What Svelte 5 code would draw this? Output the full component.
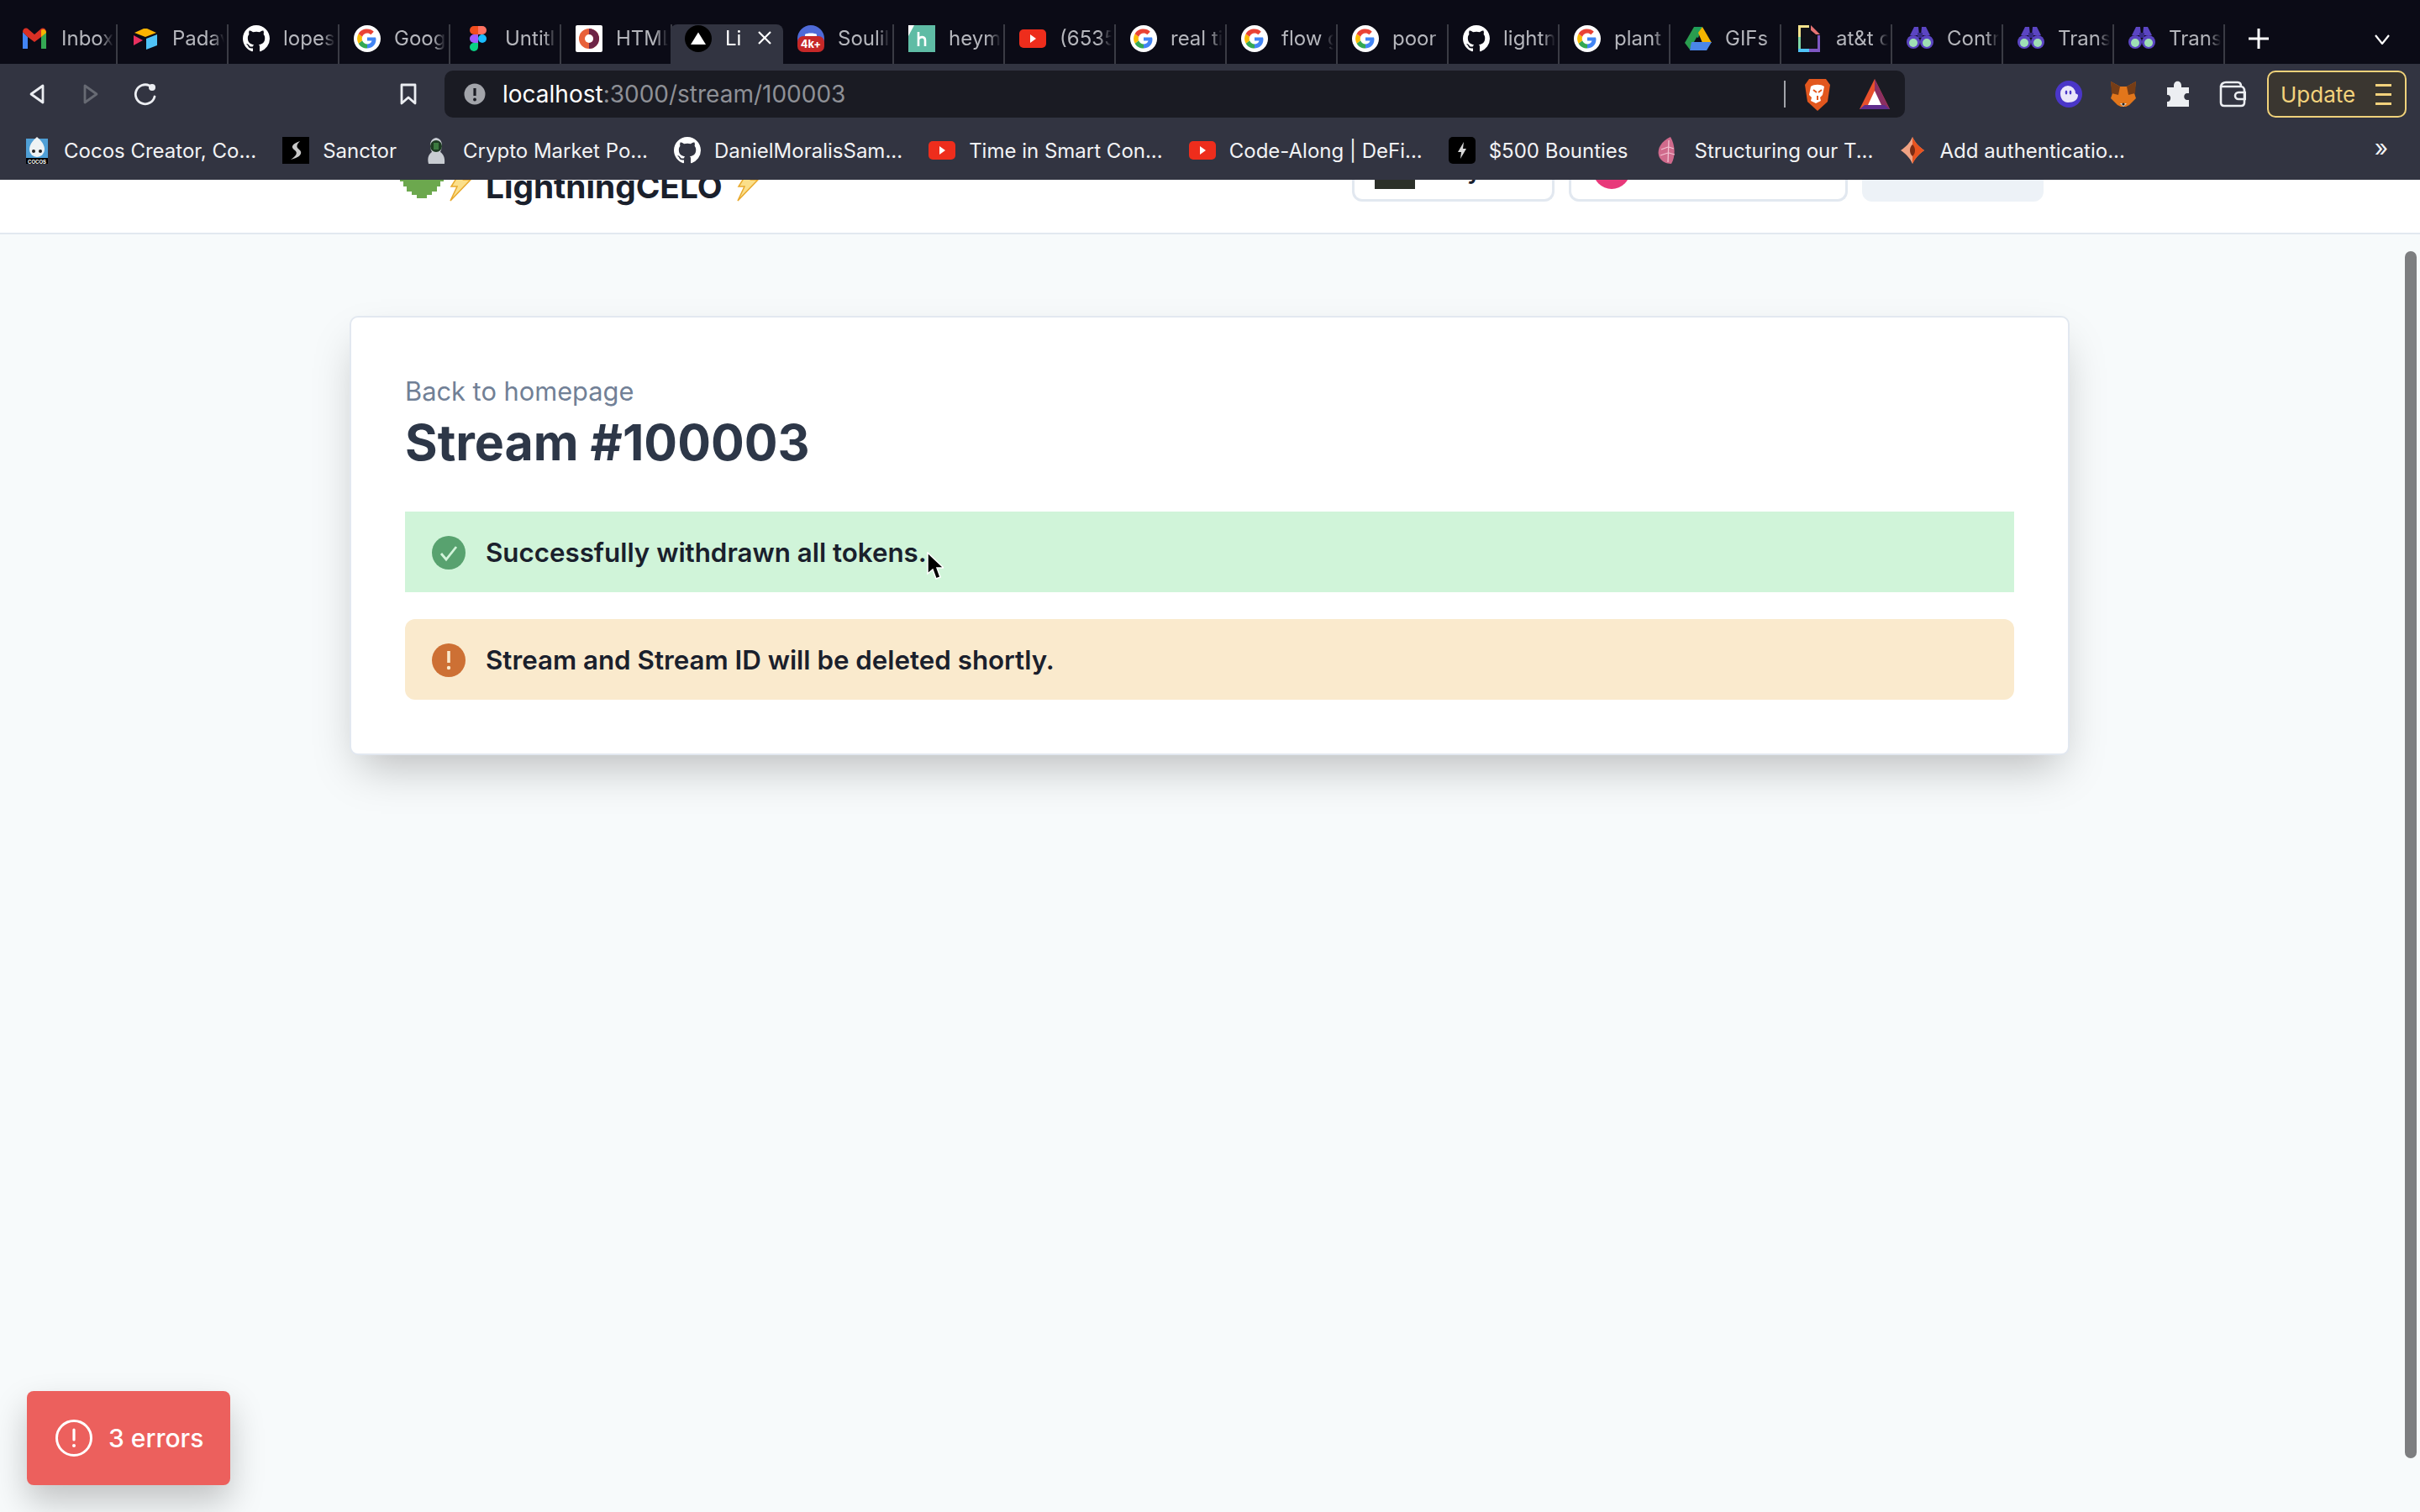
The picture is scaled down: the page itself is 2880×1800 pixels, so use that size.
<script>
  const tabs = [
    { icon: 'gmail', label: 'Inbox' },
    { icon: 'airtable', label: 'Padav' },
    { icon: 'github', label: 'lopes' },
    { icon: 'google', label: 'Goog' },
    { icon: 'figma', label: 'Untitl' },
    { icon: 'html', label: 'HTML' },
    { icon: 'vercel', label: 'Li', active: true },
    { icon: 'soul', label: 'Soulil' },
    { icon: 'hey', label: 'heym' },
    { icon: 'youtube', label: '(6535' },
    { icon: 'google', label: 'real ti' },
    { icon: 'google', label: 'flow g' },
    { icon: 'google', label: 'poor' },
    { icon: 'github', label: 'lightn' },
    { icon: 'google', label: 'plant' },
    { icon: 'drive', label: 'GIFs' },
    { icon: 'doc', label: 'at&t c' },
    { icon: 'scan', label: 'Contr' },
    { icon: 'scan', label: 'Trans' },
    { icon: 'scan', label: 'Trans' }
  ]

  const bookmarks = [
    { icon: 'cocos', label: 'Cocos Creator, Co...' },
    { icon: 'sanctor', label: 'Sanctor' },
    { icon: 'astro', label: 'Crypto Market Po...' },
    { icon: 'github', label: 'DanielMoralisSam...' },
    { icon: 'youtube', label: 'Time in Smart Con...' },
    { icon: 'youtube', label: 'Code-Along | DeFi...' },
    { icon: 'bolt', label: '$500 Bounties' },
    { icon: 'leaf', label: 'Structuring our T...' },
    { icon: 'gitdiamond', label: 'Add authenticatio...' }
  ]
</script>

{#snippet favicon(name)}
  <svg class="fav" viewBox="0 0 32 32">
    {#if name === 'gmail'}
      <path d="M2 8v20h6V14z" fill="#4285f4"/>
      <path d="M24 14v14h6V8z" fill="#34a853"/>
      <path d="M2 8c0-4 4-6 7-3l7 6 7-6c3-3 7-1 7 3l-6 6-8 6-8-6z" fill="#d93025"/>
      <path d="M24 14V6c2-2 6-1 6 3z" fill="#f4b400"/>
    {:else if name === 'airtable'}
      <path d="M14 4 3 9l13 5 13-5-11-5z" fill="#fcb400"/>
      <path d="M17 16v13l13-5V11z" fill="#4fc3f7"/>
      <path d="M2 12v12l11-6z" fill="#e8305f"/>
    {:else if name === 'github'}
      <path transform="scale(2)" d="M8 0C3.580 0 0 3.580 0 8c0 3.540 2.290 6.530 5.470 7.590.4.070.55-.17.55-.38 0-.19-.01-.82-.01-1.490-2.010.37-2.530-.49-2.690-.94-.09-.23-.48-.94-.82-1.130-.28-.15-.68-.52-.01-.53.63-.01 1.080.58 1.230.82.72 1.210 1.870.87 2.330.66.07-.52.28-.87.51-1.070-1.780-.2-3.640-.89-3.640-3.950 0-.87.31-1.590.82-2.150-.08-.2-.36-1.020.08-2.120 0 0 .67-.21 2.200.82.64-.18 1.320-.27 2-.27.68 0 1.360.09 2 .27 1.530-1.040 2.200-.82 2.200-.82.44 1.100.16 1.920.08 2.120.51.56.82 1.270.82 2.150 0 3.070-1.870 3.750-3.650 3.950.29.25.54.73.54 1.480 0 1.070-.01 1.930-.01 2.200 0 .21.15.46.55.38A8.013 8.013 0 0 0 16 8c0-4.420-3.580-8-8-8z" fill="#fff"/>
    {:else if name === 'google'}
      <circle cx="16" cy="16" r="16" fill="#fff"/>
      <path d="M26 14.500H16v4h5.600c-.8 2.600-3 4-5.600 4v5c5.500 0 10.500-3.500 10.500-11z" fill="#4285f4"/>
      <path d="M16 22.500c-2.800 0-5-1.700-5.900-4.200l-4.500 3.400c1.900 3.800 5.800 5.800 10.400 5.800z" fill="#34a853"/>
      <path d="M10.100 18.300a7 7 0 0 1 0-4.600L5.600 10.300a12 12 0 0 0 0 11.400z" fill="#fbbc05"/>
      <path d="M16 9.500c1.700 0 3.200.6 4.300 1.700l3.500-3.500C21.700 5.700 19 4.500 16 4.500c-4.600 0-8.500 2-10.400 5.800l4.500 3.400c.9-2.500 3.100-4.200 5.900-4.200z" fill="#ea4335"/>
    {:else if name === 'figma'}
      <path d="M16 1h-5a5 5 0 0 0 0 10h5z" fill="#f24e1e"/>
      <path d="M16 1h5a5 5 0 0 1 0 10h-5z" fill="#ff7262"/>
      <path d="M16 11h-5a5 5 0 0 0 0 10h5z" fill="#a259ff"/>
      <circle cx="21" cy="16" r="5" fill="#1abcfe"/>
      <path d="M11 21h5v5a5 5 0 1 1-5-5z" fill="#0acf83"/>
    {:else if name === 'html'}
      <rect width="32" height="32" rx="2" fill="#fff"/>
      <circle cx="16" cy="16" r="12" fill="#e8603a"/>
      <path d="M16 4a12 12 0 0 1 0 24v-7a5 5 0 0 0 0-10z" fill="#6e2446"/>
      <circle cx="16" cy="16" r="5" fill="#fff"/>
    {:else if name === 'vercel'}
      <circle cx="16" cy="16" r="16" fill="#000"/>
      <path d="M16 8.500 25 23H7z" fill="#fff"/>
    {:else if name === 'soul'}
      <circle cx="16" cy="16" r="16" fill="#4f6bd8"/>
      <path d="M9 11c2-2 12-2 14 0v3H9z" fill="#fff"/>
      <rect y="13" width="32" height="19" rx="7" fill="#c62828"/>
      <text x="16" y="27" text-anchor="middle" class="mini">4k+</text>
    {:else if name === 'hey'}
      <rect width="32" height="32" fill="#5fbca5"/>
      <path d="M0 0h7L0 13z" fill="#fff"/>
      <path d="M12 8v17M12 17c2-4 8-4 8 1v7" fill="none" stroke="#fff" stroke-width="2.600"/>
    {:else if name === 'youtube'}
      <rect y="5" width="32" height="22" rx="5" fill="#ee2d1c"/>
      <path d="M13 11v10l7-5z" fill="#fff"/>
    {:else if name === 'drive'}
      <path d="M11 2h10l-5 13-5-2z" fill="#1e9e5a"/>
      <path d="M21 2 32 21H21L16 9z" fill="#f5b400"/>
      <path d="M11 2 0 21l6 8 10-18z" fill="#2a9d4f"/>
      <path d="M8 20h24l-6 10H6z" fill="#4a86e8"/>
    {:else if name === 'doc'}
      <path d="M3 0h13v2H6v26h20v-16h3v20H3z" fill="#4fc3f7"/>
      <path d="M3 0h13v3H6v11H3z" fill="#f3e28c"/>
      <path d="M3 14h3v14H3z" fill="#7ed6a5"/>
      <path d="M26 12h3v20H16v-4h10z" fill="#7e57c2"/>
      <path d="M18 0l11 11h-5l-6-5z" fill="#e57373"/>
      <path d="M6 3h12v8h8v17H6z" fill="#111118"/>
    {:else if name === 'scan'}
      <path d="M4 12 9 2h5l1 10zM28 12 23 2h-5l-1 10z" fill="#5b45c2"/>
      <path d="M13 9h6v6h-6z" fill="#3a2c8c"/>
      <circle cx="8" cy="20" r="8" fill="#5b45c2"/>
      <circle cx="24" cy="20" r="8" fill="#5b45c2"/>
      <circle cx="8" cy="21" r="5" fill="#9fe0b4"/>
      <circle cx="24" cy="21" r="5" fill="#9fe0b4"/>
    {:else if name === 'cocos'}
      <rect x="3" y="2" width="26" height="23" fill="#4f9fd6"/>
      <path d="M16 0c6 5 9 10 9 15a9 9 0 0 1-18 0c0-5 3-10 9-15z" fill="#eef2f4"/>
      <circle cx="12" cy="17" r="2" fill="#222"/>
      <circle cx="20" cy="17" r="2" fill="#222"/>
      <rect x="3" y="25" width="26" height="7" fill="#000"/>
      <text x="16" y="31.500" text-anchor="middle" class="tiny">COCOS</text>
    {:else if name === 'sanctor'}
      <rect width="32" height="32" fill="#000"/>
      <path d="M21 5C12 8 9 12 15 16c4 3 1 7-5 11 9-2 16-7 10-12-4-3-3-6 1-10z" fill="#c9c9c9"/>
    {:else if name === 'astro'}
      <path d="M7 32c-2-8 1-12 4-14C7 10 9 2 16 1c7 1 9 9 5 17 3 2 6 6 5 14z" fill="#c8ccd2"/>
      <circle cx="16" cy="11" r="7" fill="#1d3b22"/>
      <path d="M13 7h6v8h-6z" fill="#3c7a40"/>
    {:else if name === 'bolt'}
      <rect width="32" height="32" rx="5" fill="#000"/>
      <path d="M18 6 11 18h4l-1 8 7-12h-4z" fill="#d8d8d8"/>
    {:else if name === 'leaf'}
      <path d="M19 0C8 5 3 14 5 22c2 7 9 10 15 10 5-8 5-22-1-32z" fill="#d06a8c"/>
      <path d="M17 4l-1 26M16 12l-8 3M16 19l-9 3M17 12l6 2M17 19l7 2" stroke="#f3c1d2" stroke-width="1.300" fill="none"/>
    {:else if name === 'gitdiamond'}
      <path d="M16 0c3 7 8 12 14 16-6 4-11 9-14 16-3-7-8-12-14-16C8 12 13 7 16 0z" fill="#f0a283"/>
      <path d="M16 0c3 7 8 12 14 16-6 4-11 9-14 16z" fill="#e8531f"/>
      <path d="M16 9c2 2 3 4 3 7s-1 5-3 7c-2-2-3-4-3-7s1-5 3-7z" fill="#7a2c14"/>
    {/if}
  </svg>
{/snippet}

{#snippet lightning()}
  <svg class="zap" viewBox="0 0 28 38">
    <path d="M14 1h13L17 12h8L1 37 9 20H2z" fill="#fbdf8a" stroke="#e8a92d" stroke-width="1.500"/>
  </svg>
{/snippet}

<div class="screen">
  <div class="tabstrip">
    {#each tabs as tab}
      <div class="tab" class:active={tab.active}>
        {@render favicon(tab.icon)}
        <span class="tab-label">{tab.label}</span>
        {#if tab.active}
          <svg class="tab-close" viewBox="0 0 16 16"><path d="M1 1l14 14M15 1 1 15" stroke="#fff" stroke-width="2.200"/></svg>
        {/if}
      </div>
    {/each}
    <svg class="new-tab" viewBox="0 0 24 24"><path d="M12 0v24M0 12h24" stroke="#fff" stroke-width="3"/></svg>
    <svg class="tab-list" viewBox="0 0 20 12"><path d="M2 1l8 10 8-10" fill="none" stroke="#fff" stroke-width="2.200"/></svg>
  </div>

  <div class="toolbar">
    <svg class="nav first" viewBox="0 0 20 26"><path d="M17 3v20L3 13z" fill="none" stroke="#eceef2" stroke-width="2.800" stroke-linejoin="round"/></svg>
    <svg class="nav" viewBox="0 0 20 26"><path d="M3 3v20l14-10z" fill="none" stroke="#676a73" stroke-width="2.800" stroke-linejoin="round"/></svg>
    <svg class="reload" viewBox="0 0 28 28"><path d="M19 4a11.500 11.500 0 1 0 6 13" fill="none" stroke="#eceef2" stroke-width="2.800" stroke-linecap="round"/><circle cx="22" cy="6" r="4" fill="#eceef2"/></svg>
    <svg class="bookmark" viewBox="0 0 20 26"><path d="M2 2h16v22l-8-7-8 7z" fill="none" stroke="#eceef2" stroke-width="2.800" stroke-linejoin="round"/></svg>

    <div class="address">
      <svg class="info" viewBox="0 0 26 26"><circle cx="13" cy="13" r="12.500" fill="#a2a4aa"/><path d="M13 6v9" stroke="#1a1b23" stroke-width="3.200"/><circle cx="13" cy="19.500" r="1.900" fill="#1a1b23"/></svg>
      <span class="url"><b>localhost</b>:3000/stream/100003</span>
      <i class="address-sep"></i>
      <svg class="brave" viewBox="0 0 32 40">
        <path d="M6 2h20l5 7-3 20-12 11L4 29 1 9z" fill="#e2571e"/>
        <path d="M8 11c4-3 12-3 16 0l-2 10-3 3 1 4-6 3-6-3 1-4-3-3z" fill="#fff"/>
        <path d="M11 15l4 3M21 15l-4 3M16 22v5" stroke="#e2571e" stroke-width="2"/>
      </svg>
      <svg class="bat" viewBox="0 0 36 36">
        <path d="M18 0 36 36H0z" fill="#e8502c"/>
        <path d="M18 0 36 36H24L18 14z" fill="#8c2f62"/>
        <path d="M0 36l6-5h24l6 5z" fill="#5f2d8c"/>
        <path d="M18 14l8 17H10z" fill="#fff"/>
      </svg>
    </div>

    <div class="extensions">
      <svg class="ext" viewBox="0 0 32 32"><circle cx="16" cy="16" r="16" fill="#4a36c8"/><path d="M6 15a9 9 0 0 1 18 0c0 1 3 1 3 2 0 6-5 9-12 9-5 0-9-4-9-11z" fill="#e9e6f9"/><ellipse cx="13" cy="14" rx="1.300" ry="2.500" fill="#4a36c8"/><ellipse cx="18" cy="14" rx="1.300" ry="2.500" fill="#4a36c8"/></svg>
      <svg class="ext" viewBox="0 0 32 32"><path d="M1 1l11 6h8l11-6-2 14 2 6-8 8-4 2h-6l-4-2-8-8 2-6z" fill="#e2761b"/><path d="M1 1l11 6-2 10-8-2zM31 1 20 7l2 10 8-2z" fill="#763d16"/><path d="M12 27h8l-4 4z" fill="#e4dfd9"/><circle cx="16" cy="28" r="1.600" fill="#222"/></svg>
      <svg class="ext" viewBox="0 0 32 32"><path d="M11 6c0-7 9-7 9 0v2h9v7h-2c-5 0-5 8 0 8h2v8H3v-6c5 1 6-9 0-8V8h8z" fill="#eceef2"/></svg>
      <svg class="ext" viewBox="0 0 32 32"><path d="M2 7c0-3 3-5 6-5h14c3 0 4 2 4 5M2 7v19c0 3 2 4 4 4h20c3 0 4-2 4-4V12c0-3-2-5-4-5z" fill="none" stroke="#eceef2" stroke-width="2.600"/><path d="M31 14h-8a4 4 0 0 0 0 8h8z" fill="none" stroke="#eceef2" stroke-width="2.600"/></svg>
    </div>

    <div class="update">
      <span>Update</span>
      <span class="burger"><i></i><i></i><i></i></span>
    </div>
  </div>

  <div class="bookmarks">
    {#each bookmarks as b}
      <div class="bm">
        {@render favicon(b.icon)}
        <span>{b.label}</span>
      </div>
    {/each}
    <span class="more">»</span>
  </div>

  <div class="viewport">
    <header>
      <div class="logo">
        <svg class="gear" viewBox="0 0 52 52">
          <path d="M20 0h12v4h6v4h6v6h4v6h4v12h-4v6h-4v6h-6v4h-6v4H20v-4h-6v-4H8v-6H4v-6H0V20h4v-6h4V8h6V4h6z" fill="#6ca84e"/>
          <circle cx="26" cy="16" r="8" fill="#fff"/>
        </svg>
        {@render lightning()}
        <span class="brand">LightningCELO</span>
        {@render lightning()}
      </div>
      <div class="actions">
        <div class="chip first-chip"><i class="thumb"></i><span>y</span></div>
        <div class="chip second-chip"><i class="avatar"></i></div>
        <div class="ghost"></div>
      </div>
    </header>

    <main>
      <section class="card">
        <a class="back" href="/">Back to homepage</a>
        <h1>Stream #100003</h1>
        <div class="alert success">
          <svg viewBox="0 0 40 40"><circle cx="20" cy="20" r="20" fill="#58a26f"/><path d="M11 21l6 7 12-15" fill="none" stroke="#d2f4da" stroke-width="2.800"/></svg>
          <span>Successfully withdrawn all tokens.</span>
        </div>
        <div class="alert warning">
          <svg viewBox="0 0 40 40"><circle cx="20" cy="20" r="20" fill="#cd7034"/><path d="M20 9v14" stroke="#faeacd" stroke-width="3.600"/><circle cx="20" cy="29" r="2.200" fill="#faeacd"/></svg>
          <span>Stream and Stream ID will be deleted shortly.</span>
        </div>
      </section>
    </main>

    <svg class="cursor" viewBox="0 0 20 34">
      <path d="M1 1v25l6-5 4 11 5-2-4-11h8z" fill="#000" stroke="#fff" stroke-width="1.500"/>
    </svg>
    <div class="scrollbar"></div>
    <div class="errors">
      <svg viewBox="0 0 44 44"><circle cx="22" cy="22" r="20.500" fill="none" stroke="#fff" stroke-width="3"/><path d="M22 12v12" stroke="#fff" stroke-width="3.200" stroke-linecap="round"/><circle cx="22" cy="31" r="2" fill="#fff"/></svg>
      <span>3 errors</span>
    </div>
  </div>
</div>

<style>
  :global(body) {
    margin: 0;
    background: #f7fafb;
  }
  .screen {
    width: 2880px;
    height: 1800px;
    display: flex;
    flex-direction: column;
    overflow: hidden;
    font-family: Inter, "Noto Sans", sans-serif;
  }

  .tabstrip {
    height: 76px;
    flex: none;
    box-sizing: border-box;
    padding: 29px 0 0 8px;
    background: #0b0b16;
    display: flex;
    position: relative;
  }
  .tab {
    width: 132px;
    height: 47px;
    box-sizing: border-box;
    padding: 1px 0 0 17px;
    display: flex;
    align-items: flex-start;
    gap: 16px;
    border-right: 2px solid #3a3b44;
    position: relative;
  }
  .tab-label {
    width: 62px;
    overflow: hidden;
    white-space: nowrap;
    font-size: 24px;
    line-height: 32px;
    color: #b5b6bc;
    mask-image: linear-gradient(90deg, #000 75%, transparent 100%);
  }
  .tab.active {
    width: 134px;
    background: #323441;
    border-right: 0;
    border-radius: 8px 8px 0 0;
    margin-left: -2px;
  }
  .tab.active .tab-label {
    width: 28px;
    color: #fff;
  }
  .tab-close {
    position: absolute;
    right: 14px;
    top: 8px;
    width: 16px;
    height: 16px;
  }
  .new-tab {
    width: 24px;
    height: 24px;
    margin: 5px 0 0 28px;
  }
  .tab-list {
    width: 20px;
    height: 12px;
    margin: 12px 0 0 125px;
  }
  .fav {
    width: 32px;
    height: 32px;
    flex: none;
  }
  .mini {
    font: 700 13px Inter, sans-serif;
    fill: #fff;
  }
  .tiny {
    font: 700 6px Inter, sans-serif;
    fill: #fff;
  }

  .toolbar {
    height: 64px;
    flex: none;
    box-sizing: border-box;
    padding-top: 8px;
    background: #323441;
    display: flex;
    align-items: center;
  }
  .nav {
    width: 20px;
    height: 26px;
    margin-left: 44px;
  }
  .nav.first {
    margin-left: 34px;
  }
  .reload {
    width: 28px;
    height: 28px;
    margin-left: 41px;
  }
  .bookmark {
    width: 20px;
    height: 26px;
    margin-left: 289px;
  }
  .address {
    width: 1738px;
    height: 56px;
    margin-left: 33px;
    border-radius: 10px;
    background: #1a1b23;
    display: flex;
    align-items: center;
    box-sizing: border-box;
    padding-left: 23px;
  }
  .info {
    width: 26px;
    height: 26px;
  }
  .url {
    margin-left: 20px;
    font-size: 28px;
    color: #8e9096;
    width: 1525px;
  }
  .url b {
    font-weight: 400;
    color: #fff;
  }
  .address-sep {
    width: 2px;
    height: 32px;
    background: #a2a4aa;
  }
  .brave {
    width: 32px;
    height: 40px;
    margin-left: 22px;
  }
  .bat {
    width: 36px;
    height: 36px;
    margin-left: 34px;
  }
  .extensions {
    display: flex;
    gap: 33px;
    margin-left: 179px;
  }
  .ext {
    width: 32px;
    height: 32px;
  }
  .update {
    width: 166px;
    height: 56px;
    box-sizing: border-box;
    margin-left: 25px;
    padding: 0 16px 0 14px;
    border: 2.500px solid #f0d27a;
    border-radius: 10px;
    background: #3a3630;
    color: #f3d27c;
    font-size: 26px;
    display: flex;
    align-items: center;
    justify-content: space-between;
  }
  .burger {
    display: flex;
    flex-direction: column;
    gap: 8px;
  }
  .burger i {
    width: 19px;
    height: 3px;
    background: #f3d27c;
  }

  .bookmarks {
    height: 74px;
    flex: none;
    box-sizing: border-box;
    padding: 4px 0 0 28px;
    background: #323441;
    display: flex;
    align-items: center;
    gap: 31px;
    color: #f2f3f5;
    font-size: 24px;
    position: relative;
  }
  .bm {
    display: flex;
    align-items: center;
    gap: 16px;
    white-space: nowrap;
  }
  .more {
    position: absolute;
    right: 38px;
    top: 19px;
    font-size: 28px;
  }

  .viewport {
    flex: 1;
    position: relative;
    display: flex;
    flex-direction: column;
  }
  header {
    height: 65px;
    flex: none;
    box-sizing: border-box;
    border-bottom: 2px solid #e2e8f0;
    background: #fff;
    padding: 0 448px 37px 476px;
    display: flex;
    justify-content: space-between;
    align-items: flex-end;
    overflow: hidden;
  }
  .logo {
    display: flex;
    align-items: flex-end;
  }
  .gear {
    width: 52px;
    height: 52px;
    flex: none;
    margin: 0 7px 4px 0;
  }
  .zap {
    width: 28px;
    height: 38px;
    flex: none;
  }
  .brand {
    font-size: 38.800px;
    font-weight: 700;
    line-height: 48px;
    color: #1a202c;
    margin: 0 17px -6px 15px;
  }
  .actions {
    display: flex;
    gap: 17px;
  }
  .chip {
    height: 80px;
    box-sizing: border-box;
    border: 3px solid #e2e8f0;
    border-top: 0;
    border-radius: 0 0 12px 12px;
    display: flex;
    align-items: flex-end;
  }
  .first-chip {
    width: 241px;
    padding: 0 0 12px 24px;
    font-size: 28px;
    color: #1a202c;
    font-weight: 600;
  }
  .first-chip span {
    margin: 0 0 7px 62px;
    line-height: 30px;
  }
  .thumb {
    width: 48px;
    height: 48px;
    background: #2c3029;
  }
  .second-chip {
    width: 332px;
    padding: 0 0 12px 26px;
  }
  .avatar {
    width: 44px;
    height: 44px;
    border-radius: 50%;
    background: #e8397a;
  }
  .ghost {
    width: 216px;
    height: 80px;
    background: #edf2f7;
    border-radius: 0 0 12px 12px;
  }

  main {
    flex: 1;
    box-sizing: border-box;
    padding: 97px 0 0 416px;
    background: #f7fafb;
  }
  .card {
    width: 2047px;
    height: 523px;
    box-sizing: border-box;
    padding: 63px 64px 0;
    background: #fff;
    border: 2px solid #e2e8f0;
    border-radius: 10px;
    box-shadow: 0 25px 50px -12px rgba(0, 0, 0, 0.25);
  }
  .back {
    display: block;
    font-size: 30.800px;
    line-height: 50px;
    color: #718096;
    text-decoration: none;
  }
  h1 {
    margin: 0 0 46px;
    font-size: 59px;
    line-height: 72px;
    font-weight: 700;
    color: #2d3748;
  }
  .alert {
    height: 96px;
    box-sizing: border-box;
    padding: 1px 0 0 32px;
    display: flex;
    align-items: center;
    gap: 24px;
    font-size: 31.300px;
    font-weight: 600;
    color: #1a202c;
  }
  .alert svg {
    width: 40px;
    height: 40px;
  }
  .success {
    background: #d0f4d9;
    margin-bottom: 32px;
  }
  .warning {
    background: #faeacd;
    border-radius: 12px;
  }

  .cursor {
    position: absolute;
    left: 1103px;
    top: 443px;
    width: 20px;
    height: 34px;
  }
  .scrollbar {
    position: absolute;
    left: 2862px;
    top: 85px;
    width: 14px;
    height: 1437px;
    border-radius: 7px;
    background: #7d7e80;
  }
  .errors {
    position: absolute;
    left: 32px;
    bottom: 32px;
    width: 242px;
    height: 112px;
    box-sizing: border-box;
    padding-left: 34px;
    border-radius: 8px;
    background: #ec605d;
    color: #fff;
    font-size: 30px;
    font-weight: 500;
    display: flex;
    align-items: center;
    gap: 19px;
    box-shadow: 0 20px 40px rgba(0, 0, 0, 0.22);
  }
  .errors svg {
    width: 44px;
    height: 44px;
  }
</style>
